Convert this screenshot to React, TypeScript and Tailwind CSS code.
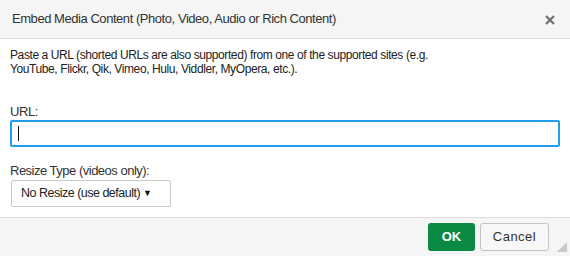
import React from "react";

export default function App() {
  return (
    <div
      className="w-[570px] h-[256px] bg-white flex flex-col overflow-hidden text-[#222]"
      style={{ fontFamily: '"Liberation Sans", Arial, sans-serif' }}
    >
      {/* header */}
      <div className="h-[39px] shrink-0 flex items-center justify-between pl-3 pr-[15px] bg-[#f5f5f5] border-b border-[#dcdcdc]">
        <span className="text-[13px] tracking-[-0.45px] text-[#333]">
          Embed Media Content (Photo, Video, Audio or Rich Content)
        </span>
        <svg width="10" height="10" viewBox="0 0 10 10" className="mt-[1px]">
          <path d="M1 1L9 9M9 1L1 9" stroke="#6f6f6f" strokeWidth="2.2" />
        </svg>
      </div>

      {/* body */}
      <div className="flex-1 flex flex-col px-[10px] pt-[9px]">
        <p className="text-[12px] leading-[14px] tracking-[-0.4px]">
          Paste a URL (shorted URLs are also supported) from one of the supported sites (e.g.
          <br />
          YouTube, Flickr, Qik, Vimeo, Hulu, Viddler, MyOpera, etc.).
        </p>

        <label className="mt-[28px] text-[13px] leading-[15px] tracking-[-0.4px] text-[#333]">URL:</label>
        <div className="mt-[1px] h-[27px] w-[550px] rounded-[2px] border-2 border-[#1f9ef0] flex items-center pl-[6px]">
          <div className="w-px h-[15px] bg-[#111]" />
        </div>

        <label className="mt-[16px] text-[13px] leading-[15px] tracking-[-0.5px] text-[#333]">
          Resize Type (videos only):
        </label>
        <div className="mt-[2px] ml-px h-[27px] w-[160px] rounded-[2px] border border-[#c8c8c8] bg-white flex items-center pl-[9px] pr-[18px]">
          <span className="text-[12.5px] tracking-[-0.5px] whitespace-nowrap text-[#222]">
            No Resize (use default)
          </span>
          <span className="ml-auto text-[9px] text-[#111]">▼</span>
        </div>
      </div>

      {/* footer */}
      <div className="relative h-[39px] shrink-0 flex items-center justify-end gap-[5px] pr-[21px] bg-[#f5f5f5] border-t border-[#dcdcdc]">
        <button className="h-[28px] w-[47px] rounded-[3px] bg-[#0a8a42] text-white text-[13px] font-bold">
          OK
        </button>
        <button className="h-[28px] w-[69px] rounded-[3px] border border-[#c4c4c4] bg-[#f7f7f7] text-[#333] text-[13px] tracking-[0.5px]">
          Cancel
        </button>
        <svg width="10" height="10" viewBox="0 0 10 10" className="absolute right-[3px] bottom-[4px]">
          <path d="M10 0L10 10L0 10Z" fill="#c8c8c8" />
        </svg>
      </div>
    </div>
  );
}
